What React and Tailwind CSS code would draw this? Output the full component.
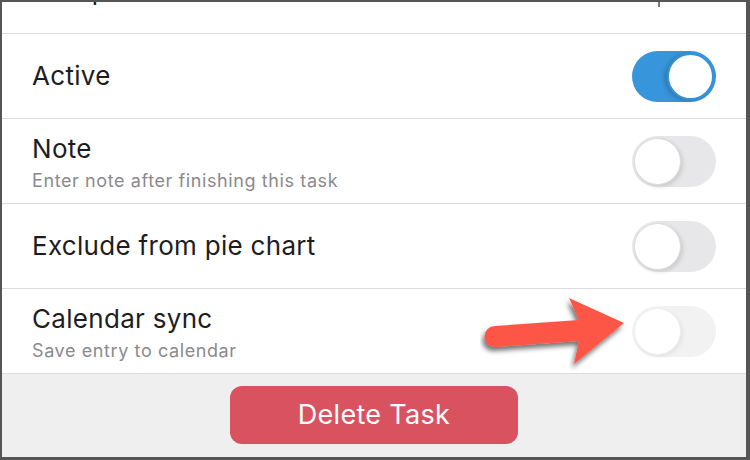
import React from 'react';

const Toggle = ({ on = false, disabled = false }) => {
  if (on) {
    return (
      <div className="w-[84px] h-[51px] rounded-full bg-[#3796db] flex items-center justify-end px-[2px] shrink-0">
        <div className="w-[47px] h-[47px] rounded-full bg-white border-2 border-[#3a92d4] shadow-[-3px_1px_4px_rgba(0,0,0,0.18)]" />
      </div>
    );
  }
  return (
    <div
      className={
        disabled
          ? 'w-[84px] h-[51px] rounded-full bg-[#f2f2f3] flex items-center px-[2px] shrink-0'
          : 'w-[84px] h-[51px] rounded-full bg-[#e7e7e9] flex items-center px-[2px] shrink-0'
      }
    >
      <div
        className={
          disabled
            ? 'w-[47px] h-[47px] rounded-full bg-white border border-[#eeeeee] shadow-[2px_2px_4px_rgba(0,0,0,0.06)]'
            : 'w-[47px] h-[47px] rounded-full bg-white border border-[#dcdcdc] shadow-[2px_2px_4px_rgba(0,0,0,0.12)]'
        }
      />
    </div>
  );
};

const Row = ({ title, subtitle, children }) => (
  <div className="relative h-[85px] border-b border-[#dcdcdc] flex items-center justify-between pl-[30px] pr-[30px] bg-white">
    {subtitle ? (
      <div className="flex flex-col pt-[4px]">
        <span className="text-[26px] leading-[30px] tracking-[0.3px] text-[#1d1d1f]">{title}</span>
        <span className="text-[18px] leading-[22px] tracking-[0.6px] text-[#8a8a8e] mt-[6px]">{subtitle}</span>
      </div>
    ) : (
      <span className="text-[26px] leading-[30px] tracking-[0.3px] text-[#1d1d1f]">{title}</span>
    )}
    {children}
  </div>
);

const Arrow = () => (
  <svg
    className="absolute left-[478px] top-[6px]"
    width="152"
    height="80"
    viewBox="0 0 152 80"
  >
    <defs>
      <filter id="arrowShadow" x="-20%" y="-20%" width="140%" height="160%">
        <feDropShadow dx="-2" dy="4" stdDeviation="2.5" floodColor="#000" floodOpacity="0.55" />
      </filter>
    </defs>
    <path
      d="M15 31 L99 25 L89 3 L144 28 L94 69 L99 46 L15 52 A10.5 10.5 0 0 1 15 31 Z"
      fill="#fd5746"
      filter="url(#arrowShadow)"
    />
  </svg>
);

export default function App() {
  return (
    <div
      className="w-[750px] h-[460px] border-t-2 border-l-2 border-r-4 border-b-[3px] border-[#555555] bg-white flex flex-col overflow-hidden"
      style={{ fontFamily: 'Inter, "Noto Sans", sans-serif' }}
    >
      {/* partially scrolled-off row */}
      <div className="relative h-[32px] border-b border-[#dcdcdc] overflow-hidden pl-[30px] shrink-0">
        <span className="block -mt-[26px] text-[26px] leading-[30px] text-[#1d1d1f]">Group</span>
        <div className="absolute left-[656px] top-0 w-[2px] h-[5px] bg-[#777]" />
      </div>

      <Row title="Active">
        <Toggle on />
      </Row>
      <Row title="Note" subtitle="Enter note after finishing this task">
        <Toggle />
      </Row>
      <Row title="Exclude from pie chart">
        <Toggle />
      </Row>
      <Row title="Calendar sync" subtitle="Save entry to calendar">
        <Arrow />
        <Toggle disabled />
      </Row>

      <div className="flex-1 bg-[#efefef] flex items-start justify-center pt-[12px]">
        <button className="w-[288px] h-[58px] rounded-[12px] bg-[#d9525f] text-white text-[27px] tracking-[0.3px]">
          Delete Task
        </button>
      </div>
    </div>
  );
}
